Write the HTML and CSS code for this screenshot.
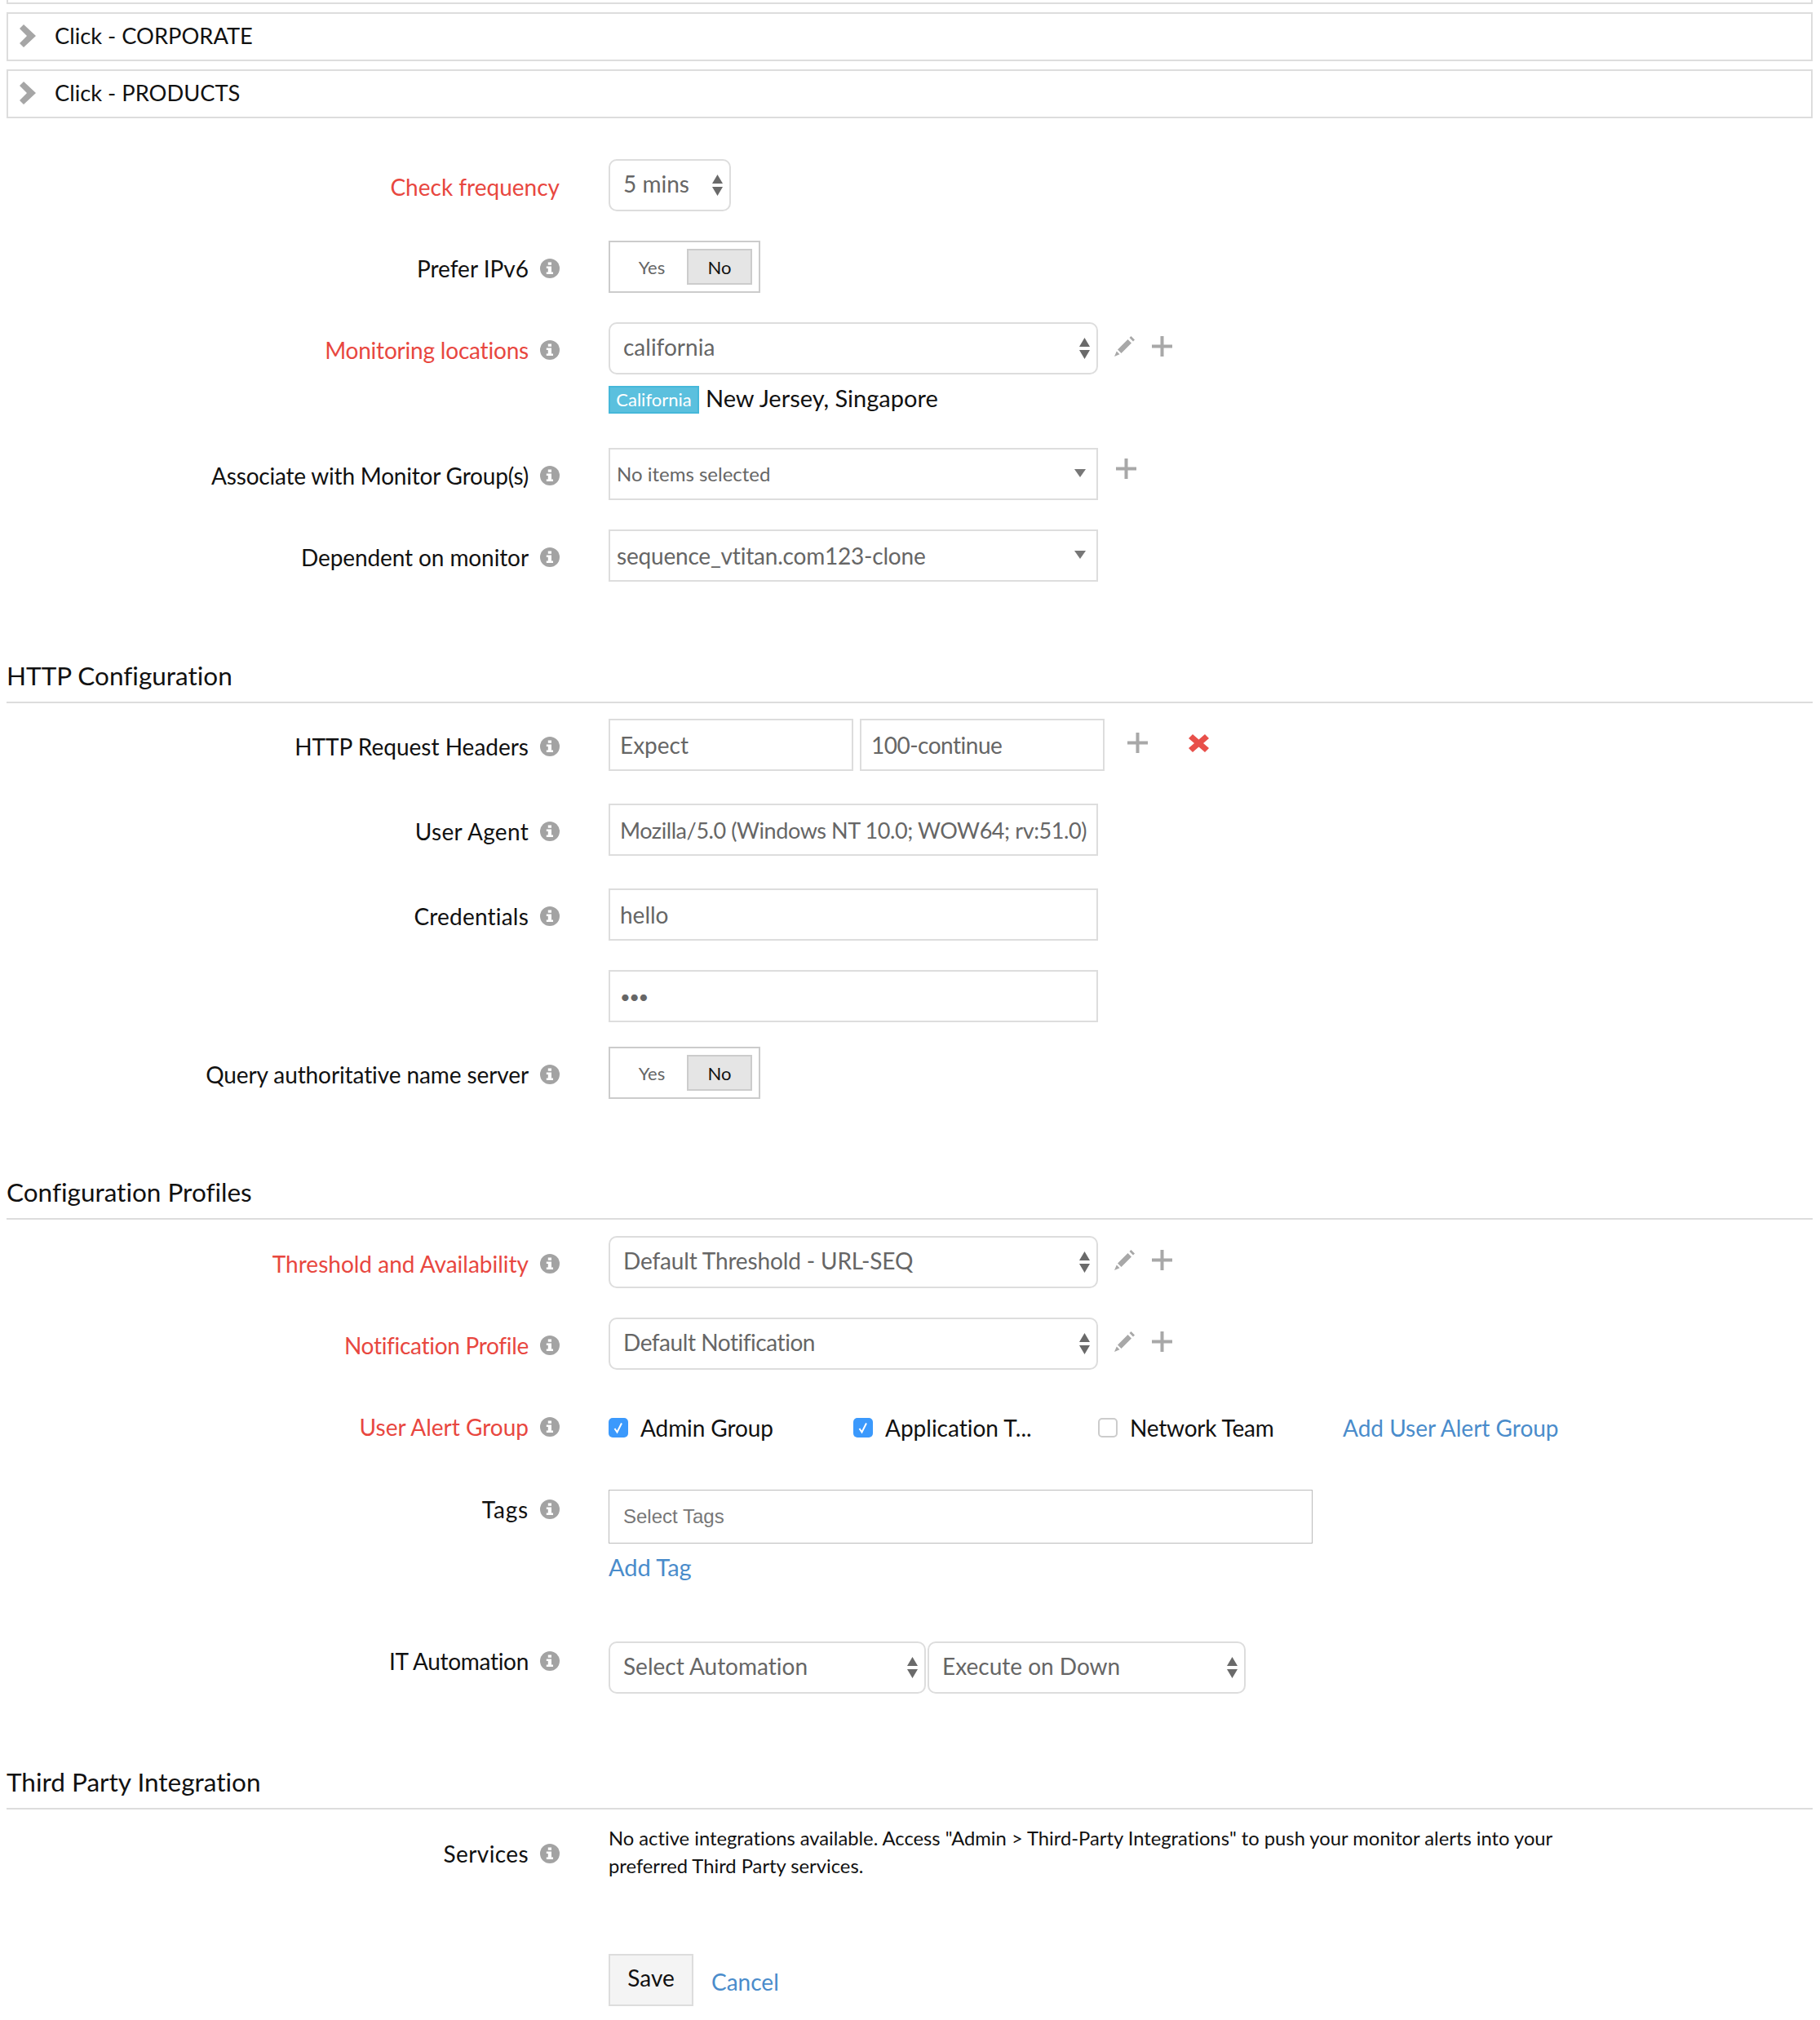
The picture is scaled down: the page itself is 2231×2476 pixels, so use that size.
FILE: index.html
```html
<!DOCTYPE html>
<html lang="en">
<head>
<meta charset="utf-8">
<title>Monitor settings</title>
<link rel="stylesheet" href="styles.css">
</head>
<body>
<svg class="defs" width="0" height="0" aria-hidden="true">
  <symbol id="info" viewBox="0 0 24 24"><circle cx="12" cy="12" r="12" fill="#a3a3a3"/><path fill="#fff" d="M9.800 4.500h4.200v3.200H9.800zM7.800 9.500h6.200v7h2v2.600H7.800v-2.600h2v-4.400h-2z"/></symbol>
  <symbol id="updown" viewBox="0 0 13 26"><path fill="#6a6a6a" d="M6.500 0L13 11H0zM0 15h13L6.500 26z"/></symbol>
  <symbol id="caret" viewBox="0 0 14 10"><path fill="#777" d="M0 0h14L7 10z"/></symbol>
  <symbol id="plus" viewBox="0 0 25 25"><path fill="#a8a8a8" d="M10.500 0h4v10.500H25v4H14.500V25h-4V14.500H0v-4h10.500z"/></symbol>
  <symbol id="pencil" viewBox="0 0 25 25"><path fill="#a8a8a8" d="M20.500 0L25 4.500 23 6.500 18.500 2zM16.500 4L21 8.500 8.500 21 4 16.500zM2.800 18.500L6.500 22.200 0 25z"/></symbol>
  <symbol id="cross" viewBox="0 0 25 22"><path fill="#e8504a" d="M5 0l7.500 6.500L20 0l5 5-7 6 7 6-5 5-7.500-6.500L5 22l-5-5 7-6-7-6z"/></symbol>
  <symbol id="chev" viewBox="0 0 20 28"><path fill="#a6a6a6" d="M5 0L20 14 5 28 0 23l9-9-9-9z"/></symbol>
  <symbol id="tick" viewBox="0 0 24 24"><path fill="none" stroke="#fff" stroke-width="2" d="M7.500 13l3 4.500 5.500-11"/></symbol>
</svg>

<div class="page">
  <div class="prior"></div>
  <div class="accordion"><svg class="chev"><use href="#chev"/></svg><span>Click - CORPORATE</span></div>
  <div class="accordion"><svg class="chev"><use href="#chev"/></svg><span>Click - PRODUCTS</span></div>

  <form class="form">
    <div class="row first">
      <div class="label req">Check frequency</div>
      <div class="control"><div class="select small"><span>5 mins</span><svg class="updown"><use href="#updown"/></svg></div></div>
    </div>

    <div class="row">
      <div class="label">Prefer IPv6<svg class="info"><use href="#info"/></svg></div>
      <div class="control"><div class="toggle"><span class="opt">Yes</span><span class="opt on">No</span></div></div>
    </div>

    <div class="row tall">
      <div class="label req"><span class="ls-m2">Monitoring locations</span><svg class="info"><use href="#info"/></svg></div>
      <div class="control stack">
        <div class="line">
          <div class="select wide"><span>california</span><svg class="updown"><use href="#updown"/></svg></div>
          <svg class="pencil"><use href="#pencil"/></svg><svg class="plus"><use href="#plus"/></svg>
        </div>
        <div class="locs"><span class="badge">California</span><span class="loc-text">New Jersey, Singapore</span></div>
      </div>
    </div>

    <div class="row">
      <div class="label"><span class="ls-m2">Associate with Monitor Group(s)</span><svg class="info"><use href="#info"/></svg></div>
      <div class="control"><div class="box wide drop"><span class="sm">No items selected</span><svg class="caret"><use href="#caret"/></svg></div><svg class="plus solo"><use href="#plus"/></svg></div>
    </div>

    <div class="row">
      <div class="label"><span class="ls-m1">Dependent on monitor</span><svg class="info"><use href="#info"/></svg></div>
      <div class="control"><div class="box wide drop"><span class="seq">sequence_vtitan.com123-clone</span><svg class="caret"><use href="#caret"/></svg></div></div>
    </div>

    <h2 class="section s-http">HTTP Configuration</h2>

    <div class="row step104">
      <div class="label">HTTP Request Headers<svg class="info"><use href="#info"/></svg></div>
      <div class="control">
        <div class="box half">Expect</div><div class="box half second">100-continue</div>
        <svg class="plus gap-plus"><use href="#plus"/></svg><svg class="cross"><use href="#cross"/></svg>
      </div>
    </div>
    <div class="row step104">
      <div class="label"><span class="ls-p3">User Agent</span><svg class="info"><use href="#info"/></svg></div>
      <div class="control"><div class="box wide agent">Mozilla/5.0 (Windows NT 10.0; WOW64; rv:51.0)</div></div>
    </div>
    <div class="row">
      <div class="label"><span class="ls-p2">Credentials</span><svg class="info"><use href="#info"/></svg></div>
      <div class="control"><div class="box wide">hello</div></div>
    </div>
    <div class="row step94">
      <div class="label"></div>
      <div class="control"><div class="box wide"><span class="dots">•••</span></div></div>
    </div>
    <div class="row">
      <div class="label"><span class="ls-m1">Query authoritative name server</span><svg class="info"><use href="#info"/></svg></div>
      <div class="control"><div class="toggle"><span class="opt">Yes</span><span class="opt on">No</span></div></div>
    </div>

    <h2 class="section s-conf">Configuration Profiles</h2>

    <div class="row">
      <div class="label req">Threshold and Availability<svg class="info"><use href="#info"/></svg></div>
      <div class="control"><div class="select wide"><span class="tight">Default Threshold - URL-SEQ</span><svg class="updown"><use href="#updown"/></svg></div><svg class="pencil"><use href="#pencil"/></svg><svg class="plus"><use href="#plus"/></svg></div>
    </div>
    <div class="row">
      <div class="label req"><span class="ls-m3">Notification Profile</span><svg class="info"><use href="#info"/></svg></div>
      <div class="control"><div class="select wide"><span class="ls-m4">Default Notification</span><svg class="updown"><use href="#updown"/></svg></div><svg class="pencil"><use href="#pencil"/></svg><svg class="plus"><use href="#plus"/></svg></div>
    </div>
    <div class="row checks">
      <div class="label req">User Alert Group<svg class="info"><use href="#info"/></svg></div>
      <div class="control">
        <label class="check"><span class="cb on"><svg class="tick"><use href="#tick"/></svg></span><span class="ls-m1">Admin Group</span></label>
        <label class="check"><span class="cb on"><svg class="tick"><use href="#tick"/></svg></span>Application T...</label>
        <label class="check"><span class="cb"></span><span class="ls-m2">Network Team</span></label>
        <a class="link add-group" href="#">Add User Alert Group</a>
      </div>
    </div>
    <div class="row tags-row">
      <div class="label"><span class="ls-p8">Tags</span><svg class="info"><use href="#info"/></svg></div>
      <div class="control stack">
        <div class="tags">Select Tags</div>
        <a class="link add-tag" href="#">Add Tag</a>
      </div>
    </div>
    <div class="row auto-row">
      <div class="label"><span class="ls-m3">IT Automation</span><svg class="info"><use href="#info"/></svg></div>
      <div class="control">
        <div class="select auto1"><span>Select Automation</span><svg class="updown"><use href="#updown"/></svg></div>
        <div class="select auto2"><span>Execute on Down</span><svg class="updown"><use href="#updown"/></svg></div>
      </div>
    </div>

    <h2 class="section s-third">Third Party Integration</h2>

    <div class="row services">
      <div class="label"><span class="ls-p4">Services</span><svg class="info"><use href="#info"/></svg></div>
      <div class="control"><p class="note">No active integrations available. Access "Admin &gt; Third-Party Integrations" to push your monitor alerts into your preferred Third Party services.</p></div>
    </div>

    <div class="row actions">
      <div class="label"></div>
      <div class="control"><button class="save" type="button">Save</button><a class="link cancel" href="#">Cancel</a></div>
    </div>
  </form>
</div>
</body>
</html>
```

FILE: styles.css
```css
* { box-sizing: border-box; }
html, body { margin: 0; padding: 0; background: #fff; }
body { font-family: Lato, "Open Sans", sans-serif; font-size: 28px; color: #111; font-variant-ligatures: none; }
.defs { position: absolute; }
.page { padding: 0 9px 0 8px; }

.ls-m4 { letter-spacing: -0.45px; }
.ls-m3 { letter-spacing: -0.3px; }
.ls-m2 { letter-spacing: -0.2px; }
.ls-m1 { letter-spacing: -0.1px; }
.ls-p2 { letter-spacing: 0.2px; }
.ls-p3 { letter-spacing: 0.3px; }
.ls-p4 { letter-spacing: 0.4px; }
.ls-p8 { letter-spacing: 0.8px; }

.prior { height: 5px; border: 2px solid #ddd; border-top: 0; margin-bottom: 10px; }
.accordion { display: flex; align-items: center; height: 60px; border: 2px solid #ddd; margin-bottom: 10px; padding: 0 0 3px 14px; font-size: 27.3px; }
.accordion span { margin-left: 23px; }
.chev { width: 20px; height: 28px; flex: none; }

.form { display: block; }
.row { display: flex; align-items: flex-start; margin-bottom: 36px; }
.row.first { margin-top: 50px; }
.row.tall { margin-bottom: 42px; }
.row.step104 { margin-bottom: 40px; }
.row.step94 { margin-bottom: 30px; }

.label { flex: none; width: 678px; height: 64px; margin-right: 60px; display: flex; justify-content: flex-end; align-items: center; padding-top: 4px; color: #111; }
.label.req { color: #e8473f; }
.info { width: 24px; height: 24px; margin-left: 14px; flex: none; }

.control { display: flex; align-items: flex-start; }
.control.stack { flex-direction: column; }
.line { display: flex; align-items: flex-start; }

.select, .box { height: 64px; border: 2px solid #ddd; background: #fff; color: #666; display: flex; align-items: center; flex: none; }
.select { border-radius: 10px; padding-left: 16px; position: relative; padding-bottom: 4px; }
.box { padding-left: 12px; }
.select.small { width: 150px; }
.wide { width: 600px; }
.auto1 { width: 389px; margin-right: 2px; }
.auto2 { width: 390px; }
.half { width: 300px; }
.half.second { margin-left: 8px; letter-spacing: -0.5px; }
.drop { padding-left: 8px; position: relative; }
.sm { font-size: 24px; position: relative; top: -1px; }
.seq { letter-spacing: -0.2px; }
.tight { letter-spacing: -0.15px; }
.agent { white-space: nowrap; font-size: 27px; letter-spacing: -0.42px; }
.updown { position: absolute; right: 8px; top: 17px; width: 13px; height: 26px; }
.caret { position: absolute; right: 13px; top: 24px; width: 14px; height: 10px; }
.pencil { width: 25px; height: 25px; margin: 17px 0 0 20px; flex: none; }
.plus { width: 25px; height: 25px; margin: 17px 0 0 21px; flex: none; }
.plus.solo { margin: 13px 0 0 22px; }
.plus.gap-plus { margin: 17px 0 0 28px; }
.cross { width: 25px; height: 22px; margin: 19px 0 0 50px; flex: none; }
.dots { font-size: 22px; letter-spacing: -1.5px; }

.toggle { display: flex; align-items: center; width: 186px; height: 64px; border: 2px solid #ccc; padding-left: 8px; background: #fff; }
.opt { width: 86px; height: 44px; display: flex; align-items: center; justify-content: center; font-size: 22px; color: #666; }
.opt.on { width: 80px; background: #e5e5e5; border: 2px solid #ccc; color: #111; }

.locs { display: flex; align-items: center; margin-top: 14px; height: 34px; }
.badge { display: block; width: 111px; height: 34px; line-height: 30px; text-align: center; background: #5bc0de; border: 2px solid #46b8da; color: #fff; font-size: 22px; }
.loc-text { margin-left: 8px; font-size: 29px; margin-top: -5px; }

.section { margin: 0 0 19px; font-size: 31.5px; font-weight: 400; color: #111; border-bottom: 2px solid #ddd; height: 62px; line-height: 40px; padding-top: 8px; }
.s-http { margin-top: 87px; }
.s-conf { margin-top: 86px; margin-bottom: 20px; }
.s-third { margin-top: 80px; }

.row.checks { margin-bottom: 47px; height: 64px; }
.check { display: flex; align-items: center; width: 300px; height: 64px; padding-top: 6px; }
.cb { width: 24px; height: 24px; flex: none; border-radius: 5px; border: 2px solid #ccc; background: #fff; margin-right: 15px; }
.cb.on { background: #3b99fc; border: 0; }
.tick { display: block; width: 24px; height: 24px; }
.link { color: #4a8ccb; text-decoration: none; }
.add-group { display: flex; align-items: center; height: 64px; padding-top: 6px; }

.tags-row { margin-bottom: 73px; }
.tags { width: 863px; height: 66px; border: 1px solid #bbb; display: flex; align-items: center; padding-left: 17px; font: 24px "Liberation Sans", sans-serif; color: #777; }
.add-tag { margin-top: 11px; line-height: 36px; font-size: 29px; }
.tags-row .label { height: 43px; }
.auto-row .label { height: 43px; }

.services { margin-bottom: 0; }
.services .label { height: 61px; padding-top: 9px; }
.note { margin: -1px 0 0; width: 1190px; font-size: 23.75px; line-height: 34px; color: #111; }
.actions { margin: 91px 0 0; }
.save { width: 104px; height: 64px; border: 2px solid #ddd; background: #f4f4f4; font: inherit; color: #111; padding: 0 0 6px; }
.cancel { margin-left: 22px; height: 64px; display: flex; align-items: center; padding-top: 3px; }
```
